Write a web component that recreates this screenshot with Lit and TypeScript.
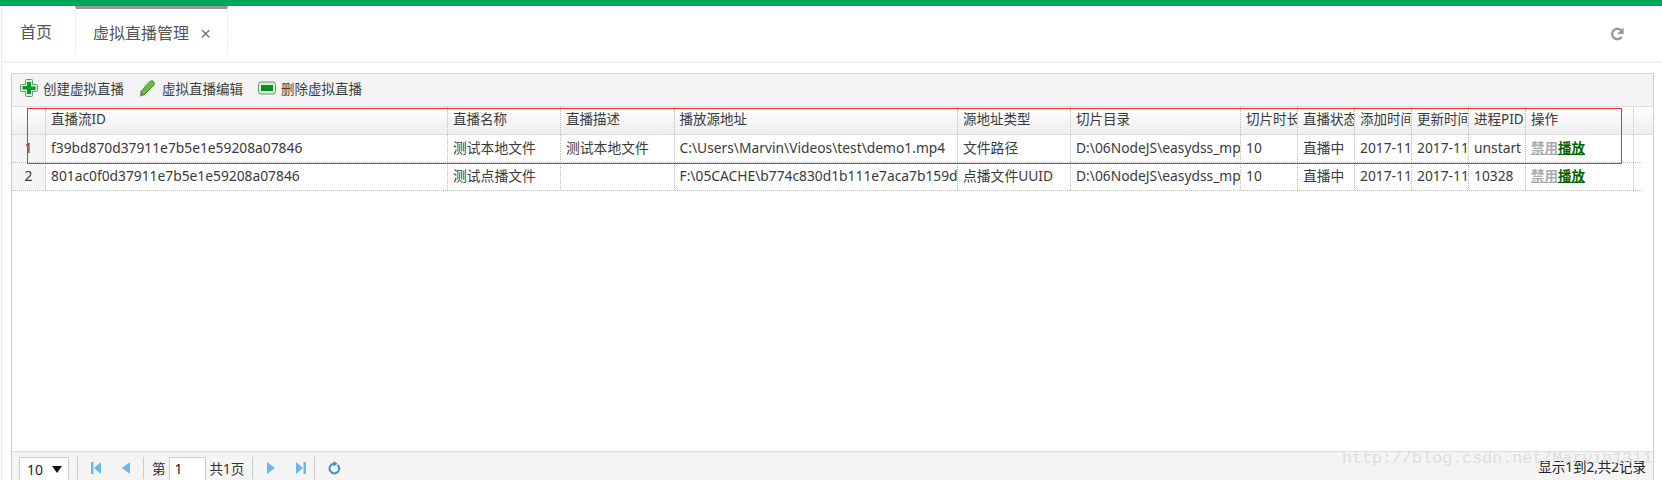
import { LitElement, html, css, svg } from "lit";
import { customElement } from "lit/decorators.js";

const widths = [34, 402, 113, 113.5, 283.5, 113, 170, 57, 57, 57, 57, 57, 108];
const headers = ["", "直播流ID", "直播名称", "直播描述", "播放源地址", "源地址类型", "切片目录", "切片时长", "直播状态", "添加时间", "更新时间", "进程PID", "操作"];
const rows = [
  ["1", "f39bd870d37911e7b5e1e59208a07846", "测试本地文件", "测试本地文件", "C:\\Users\\Marvin\\Videos\\test\\demo1.mp4", "文件路径", "D:\\06NodeJS\\easydss_mp4\\hls", "10", "直播中", "2017-11-21", "2017-11-21", "unstart"],
  ["2", "801ac0f0d37911e7b5e1e59208a07846", "测试点播文件", "", "F:\\05CACHE\\b774c830d1b111e7aca7b159d8a07846\\video", "点播文件UUID", "D:\\06NodeJS\\easydss_mp4\\hls", "10", "直播中", "2017-11-21", "2017-11-21", "10328"],
];

@customElement("app-root")
export class AppRoot extends LitElement {
  static styles = css`
    :host { display: block; height: 480px; width: 1662px; overflow: hidden; position: relative; background: #fff;
      font-family: "Noto Sans", "Noto Sans CJK SC", sans-serif; font-size: 13.5px; color: #333; box-sizing: border-box; }
    .top { height: 6px; background: #00a65a; }
    .page { display: flex; flex-direction: column; height: 474px; margin-left: 1px; border-left: 1px solid #e8ecef; }
    .tabs { display: flex; height: 57px; border-bottom: 2px solid #f0f0f0; flex: none; box-sizing: border-box; padding-bottom: 8px; position: relative; }
    .tab { display: flex; align-items: center; font-size: 16px; height: 49px; box-sizing: border-box; color: #555; }
    .home { width: 73px; padding-left: 18px; }
    .active { width: 153px; padding-left: 17px; border-top: 3px solid #999; border-left: 1px solid #f0f0f0; border-right: 1px solid #f0f0f0; gap: 11px; }
    .active .x { font-size: 19px; color: #777; font-family: "Liberation Sans", sans-serif; margin-top: 3px; }
    .reload { position: absolute; right: 37px; top: 20px; }
    .panel { margin: 10px 8px 0 9px; border: 1px solid #ccc; border-bottom: 0; border-top-color: #d4d4d4; flex: 1; display: flex; flex-direction: column; min-height: 0; }
    .bar { display: flex; align-items: center; height: 33px; background: #f4f4f4; border-bottom: 1px solid #ddd; flex: none; padding: 0 0 4px 8px; gap: 15px; color: #3e3e3e; box-sizing: border-box; }
    .btn { display: flex; align-items: center; gap: 5px; }
    .btn svg { display: block; flex: none; }
    .head { display: flex; background: linear-gradient(#fff, #eee); border-bottom: 1px solid #ddd; height: 28px; box-sizing: border-box; flex: none; }
    .row { display: flex; height: 28px; box-sizing: border-box; border-bottom: 1px dotted #bbb; flex: none; width: 1630px; }
    .cell { flex: none; box-sizing: border-box; border-right: 1px dotted #bbb; padding: 0 4px 0 5px; white-space: nowrap; overflow: hidden; line-height: 25px; font-size: 13.8px; color: #3a3a3a; }
    .head .cell { font-size: 13.5px; color: #3a3a3a; line-height: 25px; }
    .num { background: #f4f4f4; text-align: center; padding: 0; }
    .fill { flex: 1; min-height: 0; }
    .pager { height: 29px; flex: none; background: #f4f4f4; border-top: 1px solid #ddd; display: flex; align-items: flex-start; padding: 5px 0 0 7px; position: relative; box-sizing: border-box; }
    .sel { width: 50px; height: 24px; background: #fff; border: 1px solid #ccc; box-sizing: border-box; display: flex; align-items: center; justify-content: space-between; padding: 0 6px 0 7px; font-size: 14px; color: #222; flex: none; }
    .sep { width: 1px; height: 22px; background: #ccc; flex: none; margin: 0 8px; }
    .sep.wide { margin-left: 12px; }
    .ic { flex: none; display: block; margin-top: 5px; }
    .m5 { margin-left: 5px; } .m6 { margin-left: 6px; } .m20 { margin-left: 20px; } .m21 { margin-left: 21px; }
    .refresh { margin: 4px 0 0 5px; }
    .pg { font-size: 13.5px; line-height: 24px; color: #333; flex: none; }
    .inp { width: 37px; height: 24px; background: #fff; border: 1px solid #ccc; box-sizing: border-box; padding-left: 5px; margin: 0 4px 0 3px; line-height: 22px; font-size: 14px; color: #222; flex: none; }
    .info { position: absolute; right: 7px; top: 4px; font-size: 13.5px; color: #222; }
    .off { color: #aaa; text-decoration: underline; font-weight: 700; font-size: 13.5px; }
    .on { color: #060; text-decoration: underline; font-weight: 700; font-size: 13.5px; }
    .mark { position: absolute; left: 1342px; top: 449px; font: 16.7px "Liberation Mono", monospace; color: #dededa; white-space: nowrap; pointer-events: none; }
    .redbox { position: absolute; left: 27px; top: 108px; width: 1593px; height: 54px; border: 1px solid #f02c2c; pointer-events: none; }
  `;

  private icon(d: unknown, w = 18, h = 18) {
    return html`<svg width=${w} height=${h} viewBox="0 0 ${w} ${h}">${d}</svg>`;
  }

  render() {
    const blue = "#6cb8ee";
    return html`
      <div class="top"></div>
      <div class="page">
        <div class="tabs">
          <div class="tab home">首页</div>
          <div class="tab active">虚拟直播管理 <span class="x">×</span></div>
          <svg class="reload" width="16" height="16" viewBox="0 0 16 16"><path d="M12.6 11a5.2 5.2 0 1 1 0-6" fill="none" stroke="#999" stroke-width="2.4"/><path d="M14.6 1.5v6.5h-6.5z" fill="#999"/></svg>
        </div>
        <div class="panel">
          <div class="bar">
            <div class="btn">${this.icon(svg`<path d="M5.5 1.5a1 1 0 0 1 1-1h5a1 1 0 0 1 1 1v4h4a1 1 0 0 1 1 1v5a1 1 0 0 1-1 1h-4v4a1 1 0 0 1-1 1h-5a1 1 0 0 1-1-1v-4h-4a1 1 0 0 1-1-1v-5a1 1 0 0 1 1-1h4z" fill="#d8ecd8" stroke="#5e9a6a"/><path d="M7 3h4v4.500h4.500v3.500H11V15H7v-4.500H2.500V7H7z" fill="#069a2c"/>`)}创建虚拟直播</div>
            <div class="btn">${this.icon(svg`<path d="M1.500 13l9.500-10.500q2-1.500 3.500 0t.5 3.500L5 16z" fill="#6cbb3c" stroke="#4d8f35"/><path d="M5 7.500l5-5" stroke="#b5e08e" stroke-width="1.500"/><path d="M1 17.500l.6-4.500 3.600 3.200z" fill="#777"/>`)}虚拟直播编辑</div>
            <div class="btn">${this.icon(svg`<rect x="0.500" y="3" width="17" height="12" rx="2.500" fill="#d8ecd8" stroke="#5e9a6a"/><rect x="3" y="6" width="12" height="6" fill="#069028"/>`)}删除虚拟直播</div>
          </div>
          <div class="head">
            ${headers.map((h, i) => html`<div class="cell" style="width:${widths[i]}px">${h}</div>`)}
          </div>
          ${rows.map((r) => html`<div class="row">
            ${r.map((c, i) => html`<div class="cell ${i === 0 ? "num" : ""}" style="width:${widths[i]}px">${c}</div>`)}
            <div class="cell" style="width:${widths[12]}px"><span class="off">禁用</span><span class="on">播放</span></div>
          </div>`)}
          <div class="fill"></div>
          <div class="pager">
            <div class="sel">10 <svg width="10" height="7" viewBox="0 0 10 7"><path d="M0 0h10L5 7z" fill="#111"/></svg></div>
            <div class="sep"></div>
            <svg class="ic m5" width="10" height="12" viewBox="0 0 10 12"><path d="M0 0h2.500v12H0zM10 0v12L3 6z" fill=${blue}/></svg>
            <svg class="ic m21" width="9" height="12" viewBox="0 0 9 12"><path d="M8 0v12L0 6z" fill=${blue}/></svg>
            <div class="sep wide"></div>
            <span class="pg">第</span><div class="inp">1</div><span class="pg">共1页</span>
            <div class="sep"></div>
            <svg class="ic m6" width="9" height="12" viewBox="0 0 9 12"><path d="M0 0v12L8 6z" fill=${blue}/></svg>
            <svg class="ic m20" width="10" height="12" viewBox="0 0 10 12"><path d="M0 0v12L7 6zM7.500 0H10v12H7.500z" fill=${blue}/></svg>
            <div class="sep"></div>
            <svg class="ic refresh" width="13" height="14" viewBox="0 0 13 14"><path d="M9.500 4a4.800 4.800 0 1 1-3-1.200" fill="none" stroke="#3a8fd0" stroke-width="2"/><path d="M5.500 0v5.500L9.500 2.700z" fill="#3a8fd0"/></svg>
            <div class="info">显示1到2,共2记录</div>
          </div>
        </div>
      </div>
      <div class="redbox"></div>
      <div class="mark">http://blog.csdn.net/Marvin1311</div>
    `;
  }
}
